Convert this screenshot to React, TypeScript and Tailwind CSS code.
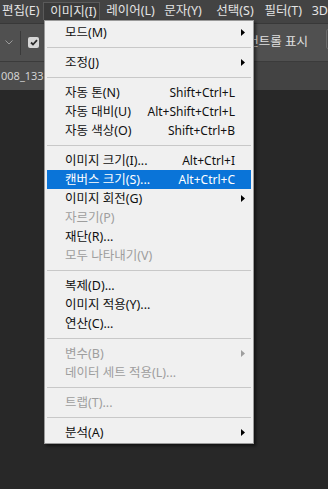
import React from "react";

type Item =
  | { sep: true }
  | {
      sep?: false;
      label: string;
      shortcut?: string;
      sub?: boolean;
      disabled?: boolean;
      active?: boolean;
    };

const items: Item[] = [
  { label: "모드(M)", sub: true },
  { sep: true },
  { label: "조정(J)", sub: true },
  { sep: true },
  { label: "자동 톤(N)", shortcut: "Shift+Ctrl+L" },
  { label: "자동 대비(U)", shortcut: "Alt+Shift+Ctrl+L" },
  { label: "자동 색상(O)", shortcut: "Shift+Ctrl+B" },
  { sep: true },
  { label: "이미지 크기(I)...", shortcut: "Alt+Ctrl+I" },
  { label: "캔버스 크기(S)...", shortcut: "Alt+Ctrl+C", active: true },
  { label: "이미지 회전(G)", sub: true },
  { label: "자르기(P)", disabled: true },
  { label: "재단(R)..." },
  { label: "모두 나타내기(V)", disabled: true },
  { sep: true },
  { label: "복제(D)..." },
  { label: "이미지 적용(Y)..." },
  { label: "연산(C)..." },
  { sep: true },
  { label: "변수(B)", sub: true, disabled: true },
  { label: "데이터 세트 적용(L)...", disabled: true },
  { sep: true },
  { label: "트랩(T)...", disabled: true },
  { sep: true },
  { label: "분석(A)", sub: true },
];

function Arrow({ color }: { color: string }) {
  return (
    <svg width="4" height="7" viewBox="0 0 4 7" className="absolute right-[6px] top-[6px]">
      <path d="M0 0 L4 3.5 L0 7 Z" fill={color} />
    </svg>
  );
}

export default function App() {
  return (
    <div className="relative w-[328px] h-[489px] overflow-hidden bg-[#282828] font-['Noto_Sans','Noto_Sans_CJK_KR',sans-serif] text-[12px]">
      {/* 메뉴 바 */}
      <div className="h-[24px] bg-[#434343] border-b border-[#383838] flex items-start pt-[2px] text-[#e4e4e4] text-[12.5px] whitespace-nowrap">
        <div className="w-[44px] pl-[2px] h-[18px] leading-[18px]">편집(E)</div>
        <div className="w-[58px] h-[18px] pl-[6px] leading-[17px] bg-[#3a3a3a] border border-[#5a5a5a] border-b-0">
          이미지(I)
        </div>
        <div className="w-[60px] pl-[6px] h-[18px] leading-[18px]">레이어(L)</div>
        <div className="w-[53px] pl-[5px] h-[18px] leading-[18px]">문자(Y)</div>
        <div className="w-[49px] pl-[5px] h-[18px] leading-[18px]">선택(S)</div>
        <div className="w-[48px] pl-[5px] h-[18px] leading-[18px]">필터(T)</div>
        <div className="pl-[5px] h-[18px] leading-[18px]">3D</div>
      </div>

      {/* 옵션 바 */}
      <div className="h-[37px] bg-[#505050] flex items-center relative text-[#e0e0e0]">
        <svg width="8" height="5" viewBox="0 0 8 5" className="ml-[5px]">
          <path d="M0.5 0.5 L4 4 L7.5 0.5" stroke="#9a9a9a" strokeWidth="1" fill="none" />
        </svg>
        <div className="ml-[7px] w-px h-[24px] bg-[#3a3a3a]" />
        <div className="ml-[7px] w-[11px] h-[11px] rounded-[2px] bg-[#d6d6d6] flex items-center justify-center">
          <svg width="8" height="7" viewBox="0 0 8 7">
            <path d="M1 3.5 L3 5.5 L7 1.2" stroke="#2a2a2a" strokeWidth="1.8" fill="none" />
          </svg>
        </div>
        <div className="ml-auto mr-[20px] whitespace-nowrap text-[12.5px]">변형 컨트롤 표시</div>
        <div className="absolute right-[-4px] top-[5px] w-[6px] h-[20px] border border-[#6a6a6a] rounded-[2px]" />
      </div>

      {/* 탭 (나머지는 메뉴 아래에 가려짐) */}
      <div className="h-[29px] bg-[#434343] border-t border-[#3b3b3b] flex items-end">
        <div className="h-[28px] w-[44px] bg-[#4d4d4d] pl-[1px] flex items-center text-[#d2d2d2] text-[11px] whitespace-nowrap">
          008_133
        </div>
      </div>

      {/* 드롭다운 메뉴 */}
      <div className="absolute left-[44px] top-[20px] w-[210px] bg-[#f0f0f0] border border-[#9a9a9a] px-[2px] pt-[2px] pb-[1px] shadow-[2px_2px_3px_rgba(0,0,0,0.55)]">
        {items.map((it, i) =>
          it.sep ? (
            <div key={i} className="h-[11px] flex items-center">
              <div className="w-full h-px bg-[#c8c8c8]" />
            </div>
          ) : (
            <div
              key={i}
              className={
                "relative h-[19px] flex items-center pl-[18px] pr-[16px] whitespace-nowrap leading-[19px] " +
                (it.active
                  ? "bg-[#0a74d8] text-white"
                  : it.disabled
                  ? "text-[#9e9e9e]"
                  : "text-[#111]")
              }
            >
              <span className="text-[12.5px]">{it.label}</span>
              {it.shortcut && <span className="ml-auto">{it.shortcut}</span>}
              {it.sub && <Arrow color={it.disabled ? "#9e9e9e" : "#000"} />}
            </div>
          )
        )}
      </div>
    </div>
  );
}
